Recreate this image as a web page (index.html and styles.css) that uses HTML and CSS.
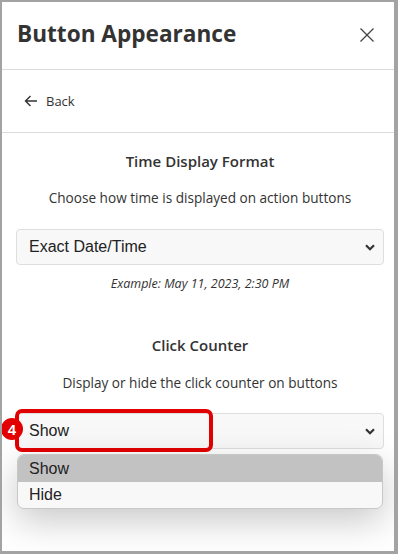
FILE: index.html
```html
<!DOCTYPE html>
<html>
<head>
<meta charset="utf-8">
<link rel="stylesheet" href="styles.css">
</head>
<body>
<div class="window">
  <header class="header">
    <h1 class="title">Button Appearance</h1>
    <svg class="close" width="16" height="16" viewBox="0 0 16 16"><path d="M1.5 1.5 L14.5 14.5 M14.5 1.5 L1.5 14.5" stroke="#444" stroke-width="1.3" fill="none"/></svg>
  </header>
  <div class="backrow">
    <svg class="arrow" width="14" height="12" viewBox="0 0 14 12"><path d="M13 6 H1.5 M6.5 1 L1.5 6 L6.5 11" stroke="#333" stroke-width="1.4" fill="none"/></svg>
    <span class="back">Back</span>
  </div>
  <main class="content">
    <h2 class="sec-title first">Time Display Format</h2>
    <p class="desc">Choose how time is displayed on action buttons</p>
    <div class="select">
      <span class="select-text">Exact Date/Time</span>
      <svg class="chev" width="10" height="7" viewBox="0 0 10 7"><path d="M1 1.2 L5 5.2 L9 1.2" stroke="#333" stroke-width="2.2" fill="none"/></svg>
    </div>
    <p class="example">Example: May 11, 2023, 2:30 PM</p>
    <h2 class="sec-title second">Click Counter</h2>
    <p class="desc">Display or hide the click counter on buttons</p>
    <div class="select-wrap">
      <div class="select">
        <span class="select-text">Show</span>
        <svg class="chev" width="10" height="7" viewBox="0 0 10 7"><path d="M1 1.2 L5 5.2 L9 1.2" stroke="#333" stroke-width="2.2" fill="none"/></svg>
      </div>
      <div class="highlight"></div>
      <div class="badge">4</div>
      <div class="dropdown">
        <div class="opt selected">Show</div>
        <div class="opt">Hide</div>
      </div>
    </div>
  </main>
</div>
</body>
</html>
```
FILE: styles.css
```css
* { box-sizing: border-box; }
html, body { margin: 0; padding: 0; }
body { width: 398px; height: 554px; overflow: hidden; background: #a0a0a0; }
.window {
  width: 398px; height: 554px;
  border-style: solid; border-color: #a3a3a3;
  border-width: 2px 4px 3px 2px;
  background: #fff;
  font-family: "Open Sans", "Noto Sans", sans-serif;
  color: #333;
  overflow: hidden;
}
.header {
  height: 68px;
  border-bottom: 1px solid #dcdcdc;
  display: flex; align-items: center; justify-content: space-between;
  padding: 0 19px 0 15px;
}
.title { margin: -5px 0 0; font-size: 22.6px; font-weight: 700; color: #333; }
.close { display: block; margin-top: -2px; }
.backrow {
  height: 63px;
  border-bottom: 1px solid #dcdcdc;
  display: flex; align-items: center;
  padding-left: 22px;
}
.arrow { display: block; margin-right: 8px; }
.back { font-size: 13px; color: #333; }
.content { padding: 0 10px 0 14px; position: relative; }
.sec-title { margin: 0; font-size: 15px; font-weight: 600; line-height: 20px; text-align: center; color: #333; }
.sec-title.first { margin-top: 18px; }
.sec-title.second { margin-top: 43px; }
.desc { margin: 17px 0 21px; font-size: 13.6px; line-height: 20px; text-align: center; color: #333; }
.sec-title.second + .desc { margin-top: 18px; margin-bottom: 20px; }
.select {
  height: 36px;
  border: 1px solid #dedede; border-radius: 4px;
  background: #f8f8f8;
  display: flex; align-items: center; justify-content: space-between;
  padding: 0 8px 0 12px;
}
.select-text { font-family: "Liberation Sans", Arial, sans-serif; font-size: 16px; color: #222; }
.chev { display: block; }
.example { margin: 11px 0 0; font-size: 12.5px; line-height: 16px; font-style: italic; text-align: center; color: #333; }
.select-wrap { position: relative; }
.highlight {
  position: absolute; left: -1px; top: -4px; width: 198px; height: 43px;
  border: 4px solid #e30000; border-radius: 7px;
}
.badge {
  position: absolute; left: -15px; top: 5px; width: 22px; height: 22px;
  border-radius: 50%; background: #e30000; color: #fff;
  font-family: "Liberation Sans", Arial, sans-serif; font-weight: 700; font-size: 15px;
  display: flex; align-items: center; justify-content: center;
}
.dropdown {
  position: absolute; left: 1px; right: 1px; top: 41px;
  border: 1px solid #c8c8c8; border-radius: 7px; overflow: hidden;
  background: #f8f8f8;
  box-shadow: 0 12px 36px rgba(0,0,0,0.22);
}
.opt {
  height: 26px; padding-left: 11px;
  display: flex; align-items: center;
  font-family: "Liberation Sans", Arial, sans-serif; font-size: 16px; color: #222;
}
.opt.selected { background: #c2c2c2; height: 27px; }
```
